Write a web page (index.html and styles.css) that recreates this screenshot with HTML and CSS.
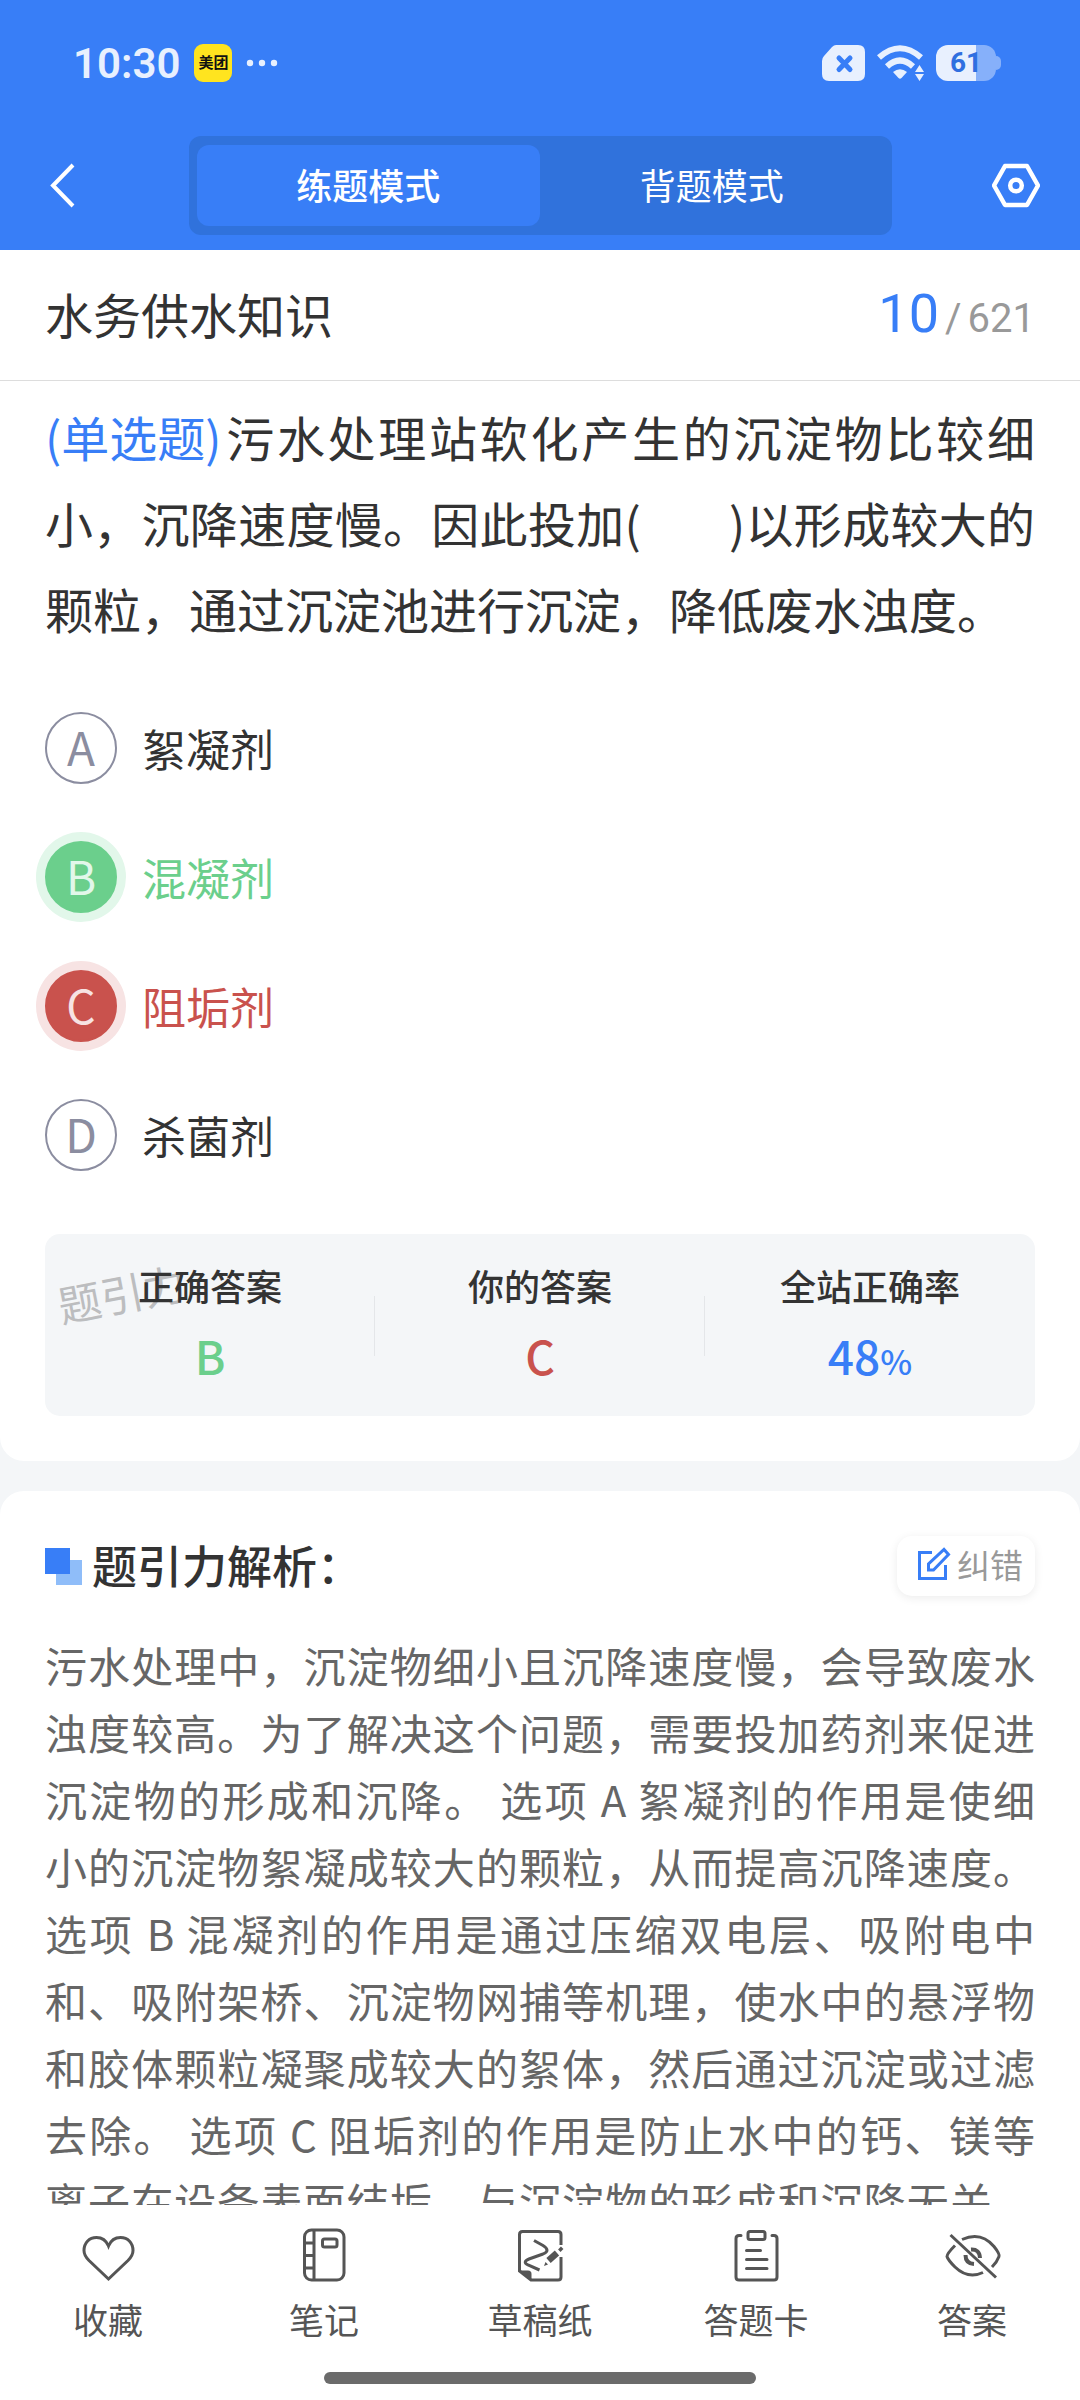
FILE: index.html
```html
<!DOCTYPE html>
<html lang="zh-CN">
<head>
  <meta charset="UTF-8" />
  <meta name="viewport" content="width=device-width, initial-scale=1.0"/>
  <title>水务供水知识</title>
  <link rel="stylesheet" href="styles.css">
</head>
<body>

  <header class="header">
    <div class="status">
      <span class="time">10:30</span>
      <span class="app-badge">美团</span>
      <svg class="dots" width="32" height="8" viewBox="0 0 32 8" fill="#e8f0fe"><circle cx="4" cy="4" r="3.2"/><circle cx="16" cy="4" r="3.2"/><circle cx="28" cy="4" r="3.2"/></svg>
      <div class="status-right">
        <svg width="44" height="36" viewBox="0 0 44 36">
          <path d="M14 0H36Q43 0 43 7V29Q43 36 36 36H7Q0 36 0 29V16Q0 13 2 11L10 2Q12 0 14 0Z" fill="#e8f0fe"/>
          <path d="M17 13L28 24.500M28 13L17 24.500" stroke="#387ef7" stroke-width="5" stroke-linecap="round"/>
        </svg>
        <svg width="48" height="36" viewBox="0 0 48 36" fill="none" stroke="#e8f0fe" stroke-width="6">
          <path d="M2 12.500Q23 -6 44 12.500"/>
          <path d="M10 21.500Q23 9.500 36 21.500"/>
          <path d="M16 27Q23 21.500 30 27L24.500 33Q23 34.500 21.500 33Z" fill="#e8f0fe" stroke="none"/>
          <path d="M42.500 20L47 27H38ZM38 29H47L42.500 36Z" fill="#e8f0fe" stroke="none"/>
        </svg>
        <div class="battery"><span>61</span></div>
      </div>
    </div>
    <nav class="nav">
      <button class="icon-btn" aria-label="返回">
        <svg width="48" height="48" viewBox="0 0 48 48" fill="none" stroke="#fff" stroke-width="4"><path d="M33 3L13 23.500L33 44"/></svg>
      </button>
      <div class="tabs">
        <button class="tab active">练题模式</button>
        <button class="tab">背题模式</button>
      </div>
      <button class="icon-btn" aria-label="设置">
        <svg width="48" height="48" viewBox="0 0 48 48" fill="none" stroke="#fff" stroke-width="4.500" stroke-linejoin="round"><path d="M13 4H35L46 23.500L35 43H13L2 23.500Z"/><circle cx="24" cy="23.500" r="5.800"/></svg>
      </button>
    </nav>
  </header>

  <main class="content">
    <section class="card question-card">
      <div class="title-row">
        <h1>水务供水知识</h1>
        <div class="counter"><b>10</b><span>/</span><span>621</span></div>
      </div>

      <div class="question-body">
        <p class="question"><span class="kind">(单选题)</span>污水处理站软化产生的沉淀物比较细小，沉降速度慢。因此投加(&nbsp;&nbsp;&nbsp;&nbsp;&nbsp;&nbsp;&nbsp;&nbsp;)以形成较大的颗粒，通过沉淀池进行沉淀，降低废水浊度。</p>

        <div class="options">
          <button class="option"><span class="letter">A</span>絮凝剂</button>
          <button class="option right"><span class="letter">B</span>混凝剂</button>
          <button class="option wrong"><span class="letter">C</span>阻垢剂</button>
          <button class="option"><span class="letter">D</span>杀菌剂</button>
        </div>

        <div class="result">
          <span class="watermark">题引力</span>
          <dl>
            <dt>正确答案</dt>
            <dd class="green">B</dd>
          </dl>
          <dl>
            <dt>你的答案</dt>
            <dd class="red">C</dd>
          </dl>
          <dl>
            <dt>全站正确率</dt>
            <dd class="blue">48<small>%</small></dd>
          </dl>
        </div>
      </div>
    </section>

    <section class="card analysis">
      <div class="analysis-head">
        <svg width="37" height="37" viewBox="0 0 37 37"><rect x="11" y="12" width="26" height="25" fill="#8fbdf9"/><rect width="25" height="26" fill="#387ef7"/></svg>
        <h2>题引力解析：</h2>
        <button class="report">
          <svg width="34" height="34" viewBox="0 0 34 34" fill="none" stroke="#387ef7" stroke-width="3"><path d="M15 5.500H2.500V31.500H28.500V18"/><path d="M11.500 23V17L27 2.500L31.500 7.500L16.500 23Z"/></svg>
          <span>纠错</span>
        </button>
      </div>
      <p class="analysis-text">污水处理中，沉淀物细小且沉降速度慢，会导致废水浊度较高。为了解决这个问题，需要投加药剂来促进沉淀物的形成和沉降。 选项 A 絮凝剂的作用是使细<br>小的沉淀物絮凝成较大的颗粒，从而提高沉降速度。选项 B 混凝剂的作用是通过压缩双电层、吸附电中和、吸附架桥、沉淀物网捕等机理，使水中的悬浮物和胶体颗粒凝聚成较大的絮体，然后通过沉淀或过滤去除。 选项 C 阻垢剂的作用是防止水中的钙、镁等<br>离子在设备表面结垢，与沉淀物的形成和沉降无关。</p>
    </section>
  </main>

  <footer class="footer">
    <div class="toolbar">
      <button class="tool">
        <svg viewBox="0 0 60 60"><path d="M30.500 21C28 15 23 12.500 18.500 12.500C11 12.500 6 18 6 25.500C6 30 8 32.500 11 35.500L30.500 54L50 35.500C53 32.500 55 30 55 25.500C55 18 50 12.500 42.500 12.500C38 12.500 33 15 30.500 21Z"/></svg>
        收藏
      </button>
      <button class="tool">
        <svg viewBox="0 0 60 60"><rect x="10.500" y="5" width="39.500" height="50" rx="7"/><path d="M20 5V55M10.500 18H20M10.500 30.500H20M10.500 43H20"/><rect x="28.500" y="14" width="14.500" height="8" rx="2"/></svg>
        笔记
      </button>
      <button class="tool">
        <svg viewBox="0 0 60 60"><path d="M51 20V9.500Q51 6.500 48 6.500H12.500Q9.500 6.500 9.500 9.500V46L21 55H48Q51 55 51 52V32"/><path d="M9 45.500H18Q21.500 45.500 21.500 49V56Z" fill="#555" stroke="none"/><path d="M24 15.500L33 20.500Q41 25.500 33 29L19 34Q12 37 18 40L29.500 45"/><path d="M38.500 35.500L47 28" stroke-width="6.500"/><path d="M49.500 23L52 25.500" stroke-width="4"/><path d="M34 41L35.500 37L38 39.500Z" fill="#555" stroke="none"/></svg>
        草稿纸
      </button>
      <button class="tool">
        <svg viewBox="0 0 60 60" stroke-linecap="round"><path d="M15 10.500H13Q10 10.500 10 13.500V52Q10 55 13 55H48Q51 55 51 52V13.500Q51 10.500 48 10.500H46"/><rect x="22" y="6.500" width="17" height="8" rx="2"/><path d="M20.500 25.500H34.500M20.500 34.500H41M20.500 43.500H41"/></svg>
        答题卡
      </button>
      <button class="tool">
        <svg viewBox="0 0 60 60"><path d="M8.500 10L54 52.500"/><path d="M20 14.500Q39 6 52 21.500Q58 29 57 31.500Q55 37 50 42"/><path d="M13 20.500Q5 28.500 5 31.500Q6 35 13 42Q26 54.500 41 47.500"/><path d="M29 24.500Q37.500 24 38 33" stroke-width="4"/><path d="M23.500 30Q23.500 38.500 32 39" stroke-width="4"/></svg>
        答案
      </button>
    </div>
    <div class="home-bar"></div>
  </footer>

</body>
</html>
```
FILE: styles.css
```css
* {
  box-sizing: border-box;
}

body {
  margin: 0;
  height: 100vh;
  display: flex;
  flex-direction: column;
  background: #f4f6f8;
  color: #333;
  font-family: "Noto Sans CJK SC", sans-serif;
}

h1, h2, p, dl, dd {
  margin: 0;
  font-weight: 400;
}

button {
  margin: 0;
  padding: 0;
  border: none;
  background: none;
  color: inherit;
  font-family: inherit;
  cursor: pointer;
}

svg {
  display: block;
  flex-shrink: 0;
}

.header {
  flex-shrink: 0;
  background: #387ef7;
  color: white;
}

.status {
  display: flex;
  align-items: center;
  height: 126px;
  padding: 0 78px 0 73px;
}

.time {
  font-family: Roboto, sans-serif;
  font-size: 42px;
  font-weight: 600;
  color: #e8f0fe;
}

.app-badge {
  width: 38px;
  height: 38px;
  margin: 0 14px;
  border-radius: 9px;
  background: #ffe41f;
  color: #111;
  font-size: 15px;
  font-weight: 700;
  line-height: 36px;
  text-align: center;
}

.status-right {
  display: flex;
  align-items: center;
  gap: 11px;
  margin-left: auto;
}

.battery {
  position: relative;
  width: 60px;
  height: 36px;
  margin-right: 6px;
  border-radius: 12px;
  background: linear-gradient(to right, #e8f0fe 40px, #86b0fa 40px);
  color: #2f6fe0;
  font-family: Roboto, sans-serif;
  font-size: 28px;
  font-weight: 700;
  line-height: 36px;
  text-align: center;
}

.battery::after {
  content: "";
  position: absolute;
  right: -5px;
  top: 11px;
  width: 5px;
  height: 14px;
  border-radius: 0 5px 5px 0;
  background: #86b0fa;
}

.nav {
  display: flex;
  align-items: center;
  justify-content: space-between;
  padding: 10px 40px 15px;
}

.icon-btn {
  width: 48px;
  height: 48px;
}

.tabs {
  display: flex;
  width: 703px;
  max-width: 75%;
  height: 99px;
  padding: 9px 8px;
  border-radius: 12px;
  background: #3072dc;
}

.tab {
  flex: 1;
  padding-bottom: 4px;
  border-radius: 12px;
  color: white;
  font-size: 36px;
}

.tab.active {
  background: #387ef7;
  font-weight: 500;
}

.content {
  flex: 1;
  min-height: 0;
  overflow: hidden;
}

.card {
  background: white;
  border-radius: 24px;
}

.question-card {
  border-radius: 0 0 24px 24px;
  margin-bottom: 30px;
}

.title-row {
  display: flex;
  align-items: center;
  justify-content: space-between;
  height: 131px;
  padding: 0 45px 4px;
  border-bottom: 1px solid #ddd;
}

.title-row h1 {
  font-size: 48px;
}

.counter {
  display: flex;
  align-items: baseline;
  gap: 6px;
  color: #999;
  font-family: Roboto, sans-serif;
  font-size: 40px;
}

.counter b {
  color: #387ef7;
  font-size: 54px;
  font-weight: 400;
}

.question-body {
  padding: 12px 45px 45px;
}

.question {
  font-size: 48px;
  line-height: 86px;
  text-align: justify;
}

.kind {
  display: inline-block;
  margin-right: 2px;
  color: #387ef7;
}

.options {
  display: flex;
  flex-direction: column;
  align-items: flex-start;
  gap: 57px;
  margin: 61px 0 63px;
}

.option {
  display: flex;
  align-items: center;
  gap: 25px;
  font-size: 44px;
  line-height: 70px;
}

.letter {
  width: 72px;
  height: 72px;
  border: 2px solid #8b8da0;
  border-radius: 50%;
  color: #8b8da0;
  font-size: 46px;
  line-height: 64px;
}

.right {
  color: #6bcf8c;
}

.right .letter {
  border-color: #6bcf8c;
  background: #6bcf8c;
  box-shadow: 0 0 0 9px #e2f7ea;
  color: #e2f7ea;
}

.wrong {
  color: #c9524d;
}

.wrong .letter {
  border-color: #c9524d;
  background: #c9524d;
  box-shadow: 0 0 0 9px #f7e3e3;
  color: #f7e3e3;
}

.result {
  position: relative;
  display: flex;
  padding: 24px 0 28px;
  border-radius: 15px;
  background: #f4f6f8;
  text-align: center;
}

.result dl {
  position: relative;
  flex: 1;
}

.result dl + dl::before {
  content: "";
  position: absolute;
  left: -1px;
  top: 38px;
  width: 1px;
  height: 60px;
  background: #e4e6e9;
}

.result dt {
  margin-bottom: 10px;
  font-size: 36px;
  font-weight: 500;
  line-height: 54px;
}

.result dd {
  font-size: 46px;
  font-weight: 500;
  line-height: 66px;
}

.result small {
  font-size: 34px;
  line-height: 1;
}

.watermark {
  position: absolute;
  left: 12px;
  top: 28px;
  color: #bcbdbf;
  font-size: 43px;
  line-height: 60px;
  transform: rotate(-11deg);
}

.green {
  color: #6bcf8c;
}

.red {
  color: #c9524d;
}

.blue {
  color: #387ef7;
}

.analysis {
  padding: 45px 45px 0;
}

.analysis-head {
  display: flex;
  align-items: center;
  gap: 10px;
  height: 60px;
  margin-bottom: 35px;
}

.analysis-head h2 {
  padding-bottom: 4px;
  font-size: 45px;
  font-weight: 500;
}

.report {
  display: flex;
  align-items: center;
  gap: 6px;
  height: 60px;
  margin-left: auto;
  padding: 0 12px 4px 20px;
  border-radius: 15px;
  background: white;
  box-shadow: 0 2px 10px rgba(0,0,0,0.08);
  color: #999;
  font-size: 33px;
}

.analysis-text {
  color: #666;
  font-size: 42px;
  line-height: 67px;
  text-align: justify;
  text-align-last: justify;
}

.footer {
  flex-shrink: 0;
  padding: 20px 0 16px;
  background: white;
}

.toolbar {
  display: flex;
}

.tool {
  flex: 1;
  display: flex;
  flex-direction: column;
  align-items: center;
  gap: 10px;
  color: #555;
  font-size: 35px;
  line-height: 48px;
}

.tool svg {
  width: 60px;
  height: 60px;
  fill: none;
  stroke: #555;
  stroke-width: 3;
}

.home-bar {
  width: 40%;
  height: 12px;
  margin: 29px auto 0;
  border-radius: 6px;
  background: #6b6b6b;
}
```
